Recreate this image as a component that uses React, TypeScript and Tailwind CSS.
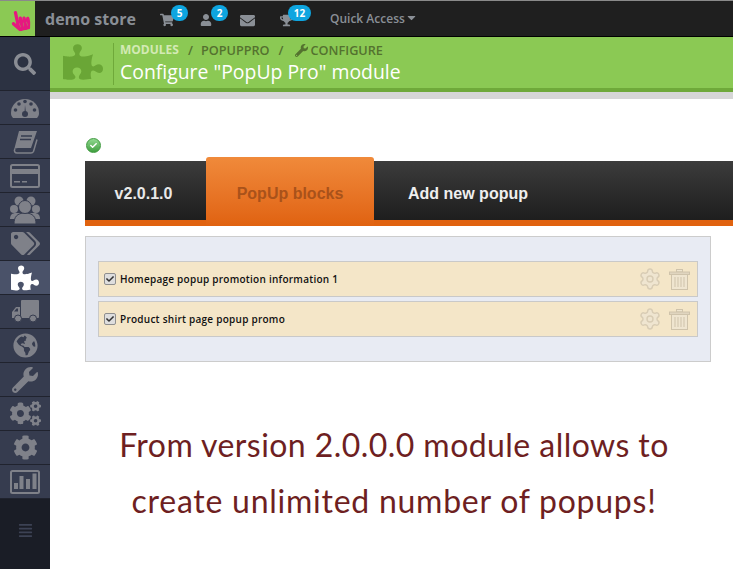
import { FaShoppingCart, FaUser, FaEnvelope, FaTrophy, FaCaretDown, FaSearch, FaTags, FaPuzzlePiece, FaGlobeAmericas, FaWrench, FaCogs, FaCog, FaAlignJustify, FaHandPointer, FaCheck } from 'react-icons/fa'
import { Settings } from 'lucide-react'

const SIDE_BG = '#363c4f'

function GaugeIcon() {
  return (
    <svg width="28" height="21" viewBox="0 0 28 21" fill="currentColor">
      <path d="M0 16A14 14 0 0 1 28 16c0 2-.6 3.5-2 5H2C.6 19.500 0 18 0 16z" />
      <g fill={SIDE_BG}>
        <circle cx="4.500" cy="13" r="1.800" />
        <circle cx="8" cy="7" r="1.800" />
        <circle cx="14" cy="4.500" r="1.800" />
        <circle cx="20" cy="7" r="1.800" />
        <circle cx="23.500" cy="13" r="1.800" />
        <circle cx="14" cy="17" r="3" />
      </g>
      <path d="M13.500 16l.5-8 1 8z" fill={SIDE_BG} />
    </svg>
  )
}

function BookIcon() {
  return (
    <svg width="26" height="24" viewBox="0 0 26 24" fill="currentColor">
      <path d="M7 1h18l-6 17H6c-2 0-3.500.8-4 2z" />
      <path d="M3 19c-1.500 2 0 4 2 4h14c1.500 0 2-.5 2.500-1.500l3.500-12" fill="none" stroke="currentColor" strokeWidth="1.500" />
      <path d="M9 6h11M8 9.500h11" stroke={SIDE_BG} strokeWidth="1.500" />
    </svg>
  )
}

function CardIcon() {
  return (
    <svg width="30" height="24" viewBox="0 0 30 24" fill="currentColor">
      <rect x="1" y="1" width="28" height="22" rx="1.500" fill="none" stroke="currentColor" strokeWidth="2" />
      <rect x="1" y="5" width="28" height="5" />
      <rect x="4" y="17" width="6" height="1.500" />
      <rect x="12" y="17" width="5" height="1.500" />
    </svg>
  )
}

function UsersIcon() {
  return (
    <svg width="30" height="28" viewBox="0 0 30 28" fill="currentColor">
      <circle cx="9" cy="5" r="4.500" />
      <circle cx="21" cy="5" r="4.500" />
      <circle cx="4" cy="13" r="4" />
      <circle cx="26" cy="13" r="4" />
      <path d="M0 23c0-4 2-6 6-6h18c4 0 6 2 6 6z" />
      <path d="M4 28c0-7 3-11 11-11s11 4 11 11z" stroke={SIDE_BG} strokeWidth="1" />
      <circle cx="15" cy="11" r="6.500" stroke={SIDE_BG} strokeWidth="1" />
    </svg>
  )
}

function TruckIcon() {
  return (
    <svg width="27" height="23" viewBox="0 0 27 23" fill="currentColor">
      <rect x="9" y="0" width="18" height="18" rx="1" />
      <path d="M0 18v-6l4-5h4v11z" />
      <path d="M2 11.500l2.500-3H6v3z" fill={SIDE_BG} />
      <circle cx="6" cy="18.500" r="3.500" stroke={SIDE_BG} strokeWidth="1" />
      <circle cx="21" cy="18.500" r="3.500" stroke={SIDE_BG} strokeWidth="1" />
    </svg>
  )
}

function ChartIcon() {
  return (
    <svg width="30" height="24" viewBox="0 0 30 24" fill="currentColor">
      <rect x="1" y="1" width="28" height="22" rx="1.500" fill="none" stroke="currentColor" strokeWidth="2" />
      <rect x="4" y="13" width="4" height="6" />
      <rect x="9.500" y="6" width="4" height="13" />
      <rect x="16" y="9" width="4" height="10" />
      <rect x="22.500" y="3.500" width="4" height="15.500" />
    </svg>
  )
}

function TrashIcon() {
  return (
    <svg width="21" height="21" viewBox="0 0 21 21" fill="#efe5d0" stroke="#cfc3ab">
      <rect x="7.500" y=".5" width="6" height="2.500" />
      <rect x=".5" y="3" width="20" height="2.500" fill="#e0d5bf" />
      <rect x="2.500" y="5.500" width="16" height="15" />
      <path d="M6 8v10M9 8v10M12 8v10M15 8v10" />
    </svg>
  )
}

const sideItems = [
  { icon: <GaugeIcon /> },
  { icon: <BookIcon /> },
  { icon: <CardIcon /> },
  { icon: <UsersIcon /> },
  { icon: <FaTags size={29} /> },
  { icon: <FaPuzzlePiece size={28} />, active: true },
  { icon: <TruckIcon /> },
  { icon: <FaGlobeAmericas size={25} /> },
  { icon: <FaWrench size={26} /> },
  { icon: <FaCogs size={31} /> },
  { icon: <FaCog size={25} /> },
  { icon: <ChartIcon /> },
]

function TopIcon({ icon, badge, badgeClass }: { icon: React.ReactNode; badge?: string; badgeClass?: string }) {
  return (
    <div className="relative flex items-center justify-center w-[16px] h-[16px] text-[#8a8f96]">
      {icon}
      {badge && (
        <span className={`absolute -top-[7px] h-[16px] rounded-full bg-[#0ea5e0] text-white text-[10px] font-bold flex items-center justify-center ${badgeClass}`}>
          {badge}
        </span>
      )}
    </div>
  )
}

function PopupRow({ label }: { label: string }) {
  return (
    <div className="h-[36px] bg-[#f4e6c8] border border-[#c9c9c9] flex items-center pl-[5px] pr-[7px]">
      <span className="w-[12px] h-[12px] rounded-[2px] border border-[#8f8f8f] bg-[#dedede] flex items-center justify-center text-[#333]">
        <FaCheck size={8} />
      </span>
      <span className="ml-[4px] text-[10px] font-semibold tracking-[0.25px] text-[#111]">{label}</span>
      <div className="ml-auto flex items-center gap-[7px]">
        <Settings size={24} strokeWidth={1.400} className="text-[#d8ccb4] fill-[#efe5d0]" />
        <TrashIcon />
      </div>
    </div>
  )
}

export default function App() {
  return (
    <div className="w-[733px] h-[569px] overflow-hidden bg-white flex flex-col font-['Open_Sans',sans-serif]">
      <div className="h-[37px] shrink-0 bg-[#1f1f1f] border-t border-[#8a8a8a] border-b border-b-black flex items-center">
        <div className="w-[35px] h-full bg-[#8bc954] flex items-center justify-center pl-[6px] pt-[3px]">
          <FaHandPointer size={21} className="text-[#e6187f] -rotate-12" />
        </div>
        <span className="ml-[10px] text-[#8a8f96] text-[16px] font-bold w-[114px]">demo store</span>
        <div className="flex items-center mt-[3px]">
          <TopIcon icon={<FaShoppingCart size={14} />} badge="5" badgeClass="left-[12px] w-[17px]" />
          <div className="w-[23px]" />
          <TopIcon icon={<FaUser size={12} />} badge="2" badgeClass="left-[13px] w-[17px]" />
          <div className="w-[25px]" />
          <TopIcon icon={<FaEnvelope size={15} />} />
          <div className="w-[23px]" />
          <TopIcon icon={<FaTrophy size={13} />} badge="12" badgeClass="left-[10px] w-[23px]" />
        </div>
        <span className="ml-[36px] text-[#8a8f96] text-[12px] font-semibold">Quick Access</span>
        <FaCaretDown size={13} className="text-[#8a8f96] -mt-[2px]" />
      </div>

      <div className="flex flex-1 min-h-0">
        <div className="w-[50px] shrink-0 bg-[#1a1d26] flex flex-col">
          <div className="h-[54px] bg-[#2c3242] border-b border-[#20232e] flex items-center justify-center text-[#8a8d94]">
            <FaSearch size={22} />
          </div>
          {sideItems.map((item, i) => (
            <div
              key={i}
              className={`h-[34px] border-b border-[#20232e] flex items-center justify-center ${item.active ? 'bg-[#4a5269] text-white' : 'bg-[#363c4f] text-[#7f8189]'}`}
            >
              {item.icon}
            </div>
          ))}
          <div className="flex-1 flex items-center justify-center text-[#3c4254] pb-[7px]">
            <FaAlignJustify size={15} />
          </div>
        </div>

        <div className="flex-1 min-w-0 flex flex-col">
          <div className="h-[55px] shrink-0 bg-[#8bc954] border-b-[4px] border-[#6fa93a] flex items-start pl-[13px] pt-[6px]">
            <FaPuzzlePiece size={40} className="text-[#6aa636] -mt-[1px]" />
            <div className="ml-[10px] h-[42px] border-l border-[#6fa93a] pl-[6px]">
              <div className="flex items-center text-[12.700px] font-semibold leading-[16px] -mt-[1px] mb-[1px] text-[#54722f]">
                <span className="font-bold text-[#d3eab5] text-[12px]">MODULES</span>
                <span className="ml-[9px] mr-[8px]">/</span>
                <span>POPUPPRO</span>
                <span className="ml-[9px] mr-[11px]">/</span>
                <FaWrench size={13} className="mr-[3px]" />
                <span>CONFIGURE</span>
              </div>
              <div className="text-white text-[19.400px] leading-[26px]">Configure "PopUp Pro" module</div>
            </div>
          </div>
          <div className="h-[7px] shrink-0 bg-[#d6d6d6]" />

          <div className="pl-[35px] pt-[39px]">
            <div className="ml-[1px] w-[15px] h-[15px] rounded-full bg-gradient-to-b from-[#8fd88f] to-[#3f9f3f] border border-[#3f9a3f] flex items-center justify-center text-white">
              <FaCheck size={7} />
            </div>
            <div className="mt-[4px] h-[69px] flex flex-col justify-end">
              <div className="h-[65px] border-b-[6px] border-[#e0620f] bg-gradient-to-b from-[#3c3c3c] to-[#1e1e1e] flex font-['Liberation_Sans',sans-serif] font-bold text-[16px]">
                <div className="w-[121px] flex items-center justify-center text-[#e8e8e8] pt-[6px] pr-[4px]">v2.0.1.0</div>
                <div className="w-[168px] h-[69px] -mt-[4px] rounded-t-[3px] bg-gradient-to-b from-[#f08a3a] to-[#e0620f] flex items-center justify-center text-[#a9521a] pt-[4px] z-10">PopUp blocks</div>
                <div className="ml-[34px] flex items-center text-[#efefef] pt-[6px]">Add new popup</div>
              </div>
            </div>
            <div className="mt-[10px] w-[626px] h-[126px] bg-[#e8ebf3] border border-[#cccccc] px-[12px] pt-[24px] flex flex-col gap-[4px]">
              <PopupRow label="Homepage popup promotion information 1" />
              <PopupRow label="Product shirt page popup promo" />
            </div>
          </div>

          <div className="mt-[55px] pl-[5px] text-center text-[#6e1f22] text-[32px] leading-[56px] font-['Lato',sans-serif]">
            <div className="tracking-[0.440px]">From version 2.0.0.0 module allows to</div>
            <div className="tracking-[0.750px]">create unlimited number of popups!</div>
          </div>
        </div>
      </div>
    </div>
  )
}
